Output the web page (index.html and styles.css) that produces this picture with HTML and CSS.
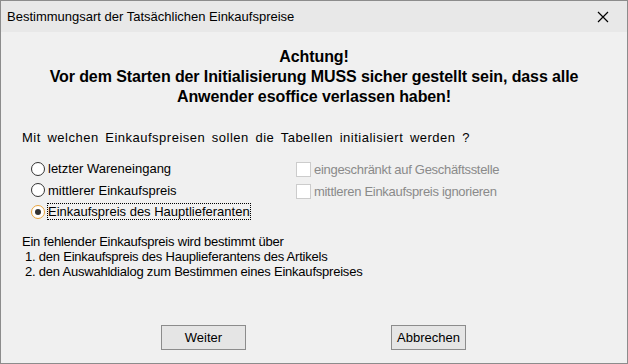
FILE: index.html
```html
<!DOCTYPE html>
<html lang="de">
<head>
  <meta charset="UTF-8" />
  <title>Bestimmungsart der Tatsächlichen Einkaufspreise</title>
  <link rel="stylesheet" href="styles.css">
</head>
<body>
  <div class="dialog">
    <!-- Title bar -->
    <div class="titlebar">
      <span class="title">Bestimmungsart der Tatsächlichen Einkaufspreise</span>
      <svg class="close" width="12" height="12" viewBox="0 0 12 12">
        <path d="M1 1 L11 11 M11 1 L1 11" stroke="#000" stroke-width="1.2" fill="none" />
      </svg>
    </div>

    <div class="content">
      <div class="warning">
        Achtung!<br>
        Vor dem Starten der Initialisierung MUSS sicher gestellt sein, dass alle<br>
        Anwender esoffice verlassen haben!
      </div>

      <p class="question">Mit welchen Einkaufspreisen sollen die Tabellen initialisiert werden ?</p>

      <div class="options">
        <div class="radios">
          <label class="option"><span class="radio"></span>letzter Wareneingang</label>
          <label class="option"><span class="radio"></span>mittlerer Einkaufspreis</label>
          <label class="option"><span class="radio checked"></span><span class="focus">Einkaufspreis des Hauptlieferanten</span></label>
        </div>
        <div class="checks">
          <label class="option disabled"><span class="checkbox"></span>eingeschränkt auf Geschäftsstelle</label>
          <label class="option disabled"><span class="checkbox"></span>mittleren Einkaufspreis ignorieren</label>
        </div>
      </div>

      <div class="info">
        <div>Ein fehlender Einkaufspreis wird bestimmt über</div>
        <div class="step">1. den Einkaufspreis des Hauplieferantens des Artikels</div>
        <div class="step">2. den Auswahldialog zum Bestimmen eines Einkaufspreises</div>
      </div>

      <div class="buttons">
        <button class="btn btn-next">Weiter</button>
        <button class="btn btn-cancel">Abbrechen</button>
      </div>
    </div>
  </div>
</body>
</html>
```

FILE: styles.css
```css
body {
  margin: 0;
  font-family: 'Liberation Sans', Arial, sans-serif;
  background: #f0f0f0;
  color: #000;
}

.dialog {
  width: 628px;
  height: 364px;
  box-sizing: border-box;
  border: 1px solid #8c8c8c;
  background: #f0f0f0;
  display: flex;
  flex-direction: column;
}

.titlebar {
  height: 31px;
  background: #e8e8e8;
  display: flex;
  align-items: center;
  justify-content: space-between;
  padding: 0 18px 0 6px;
  flex-shrink: 0;
}

.title {
  font-size: 13px;
}

.content {
  flex: 1;
  display: flex;
  flex-direction: column;
  padding: 0 21px;
}

.warning {
  text-align: center;
  font-weight: bold;
  font-size: 16px;
  line-height: 20px;
  letter-spacing: -0.1px;
  margin-top: 15px;
}

.question {
  font-size: 13px;
  margin: 23px 0 0;
  line-height: 16px;
  letter-spacing: 0.5px;
  word-spacing: 2.5px;
}

.options {
  display: flex;
  margin-top: 12px;
}

.radios {
  width: 274px;
  box-sizing: border-box;
  padding-left: 9px;
}

.option {
  display: flex;
  align-items: center;
  height: 21px;
  font-size: 13px;
}

.radios .option {
  height: 21.5px;
}

.radio {
  width: 12px;
  height: 12px;
  border: 1px solid #333;
  border-radius: 50%;
  background: #fff;
  margin-right: 3px;
  position: relative;
  flex-shrink: 0;
}

.radio.checked {
  border-color: #e8a33d;
}

.radio.checked::after {
  content: "";
  position: absolute;
  left: 3px;
  top: 3px;
  width: 6px;
  height: 6px;
  border-radius: 50%;
  background: #333;
}

.focus {
  outline: 1px dotted #000;
  line-height: 15px;
}

.checks .option {
  height: 22px;
  letter-spacing: -0.3px;
}

.checkbox {
  width: 13px;
  height: 13px;
  border: 1px solid #cccccc;
  background: #fff;
  margin-right: 3px;
  flex-shrink: 0;
}

.disabled {
  color: #8a8a8a;
}

.info {
  font-size: 13px;
  line-height: 15px;
  letter-spacing: -0.22px;
  margin-top: 11px;
}

.step {
  padding-left: 3px;
}

.buttons {
  display: flex;
  margin-top: auto;
  margin-bottom: 13px;
}

.btn {
  font-family: 'Liberation Sans', Arial, sans-serif;
  font-size: 13px;
  height: 25px;
  background: #e5e5e5;
  border: 1px solid #8c8c8c;
  color: #000;
  padding: 0;
}

.btn-next {
  width: 85px;
  margin-left: 139px;
}

.btn-cancel {
  width: 75px;
  margin-left: 145px;
}
```
